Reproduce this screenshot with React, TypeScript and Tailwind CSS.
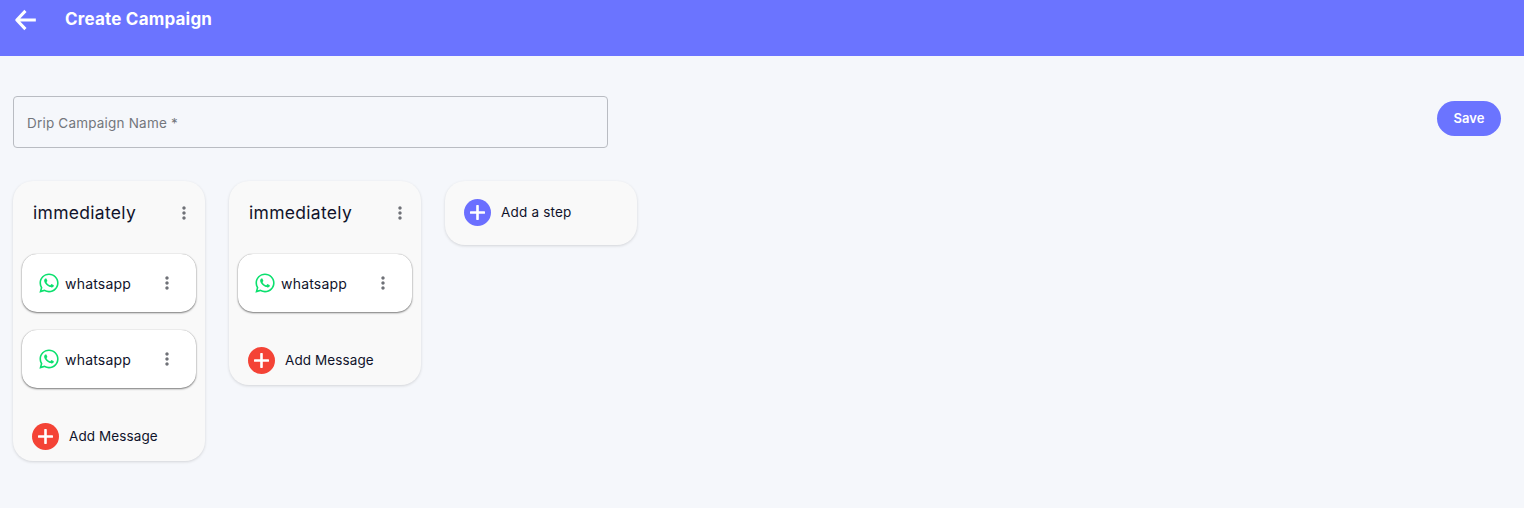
import React from "react";
import { FaWhatsapp } from "react-icons/fa";

const font = "font-['Inter','Liberation_Sans',sans-serif]";

function MoreVert() {
  return (
    <svg width="20" height="20" viewBox="0 0 24 24" fill="#6f7177" aria-hidden="true">
      <path d="M12 8c1.1 0 2-.9 2-2s-.9-2-2-2-2 .9-2 2 .9 2 2 2zm0 2c-1.1 0-2 .9-2 2s.9 2 2 2 2-.9 2-2-.9-2-2-2zm0 6c-1.1 0-2 .9-2 2s.9 2 2 2 2-.9 2-2-.9-2-2-2z" />
    </svg>
  );
}

function PlusCircle({ color }: { color: string }) {
  return (
    <span className={`flex h-[27px] w-[27px] shrink-0 items-center justify-center rounded-full ${color}`}>
      <svg width="15" height="15" viewBox="0 0 15 15" aria-hidden="true">
        <path d="M7.5 1v13M1 7.5h13" stroke="#fff" strokeWidth="2.6" strokeLinecap="round" />
      </svg>
    </span>
  );
}

function Message() {
  return (
    <div className="flex h-[58px] items-center rounded-[15px] bg-white pl-[16px] pr-[19px] shadow-[0_1px_2px_rgba(0,0,0,0.5),0_0_1px_rgba(0,0,0,0.3)]">
      <FaWhatsapp className="h-[22px] w-[22px] shrink-0 text-[#0be06e]" />
      <span className="ml-[5px] flex-1 text-[14px] tracking-[0.2px] text-[#10132b]">whatsapp</span>
      <MoreVert />
    </div>
  );
}

function Step({ count }: { count: number }) {
  return (
    <div className="flex w-[192px] flex-col rounded-[20px] bg-[#f9f9f9] pb-[11px] shadow-[0_1px_3px_rgba(0,0,0,0.14)]">
      <div className="mb-[9px] flex h-[64px] items-center justify-between pl-[20px] pr-[11px]">
        <span className="text-[17.5px] tracking-[0.3px] text-[#10132b]">immediately</span>
        <MoreVert />
      </div>
      <div className="flex flex-col gap-[18px] px-[9px]">
        {Array.from({ length: count }).map((_, i) => (
          <Message key={i} />
        ))}
      </div>
      <div className="mt-[35px] flex items-center pl-[19px]">
        <PlusCircle color="bg-[#f44336]" />
        <span className="ml-[10px] text-[13.5px] tracking-[0.1px] text-[#10132b]">Add Message</span>
      </div>
    </div>
  );
}

export default function App() {
  return (
    <div className={`${font} flex h-[508px] flex-col overflow-hidden bg-[#f5f7fb]`}>
      <header className="flex h-[56px] shrink-0 items-start bg-[#6b74ff] pl-[12px] pt-[7px] text-white">
        <svg width="26" height="26" viewBox="0 0 24 24" fill="none" stroke="#fff" strokeWidth="2.8" strokeLinejoin="round" aria-hidden="true">
          <path d="M22 12H4.4M12.4 3.6 4.4 12l8 8.4" />
        </svg>
        <h1 className="ml-[27px] mt-[2px] text-[17px] font-bold tracking-[0.2px] leading-[20px]">Create Campaign</h1>
      </header>
      <main className="flex flex-col px-[13px]">
        <div className="mt-[40px] flex items-start justify-between pr-[10px]">
          <div className="flex h-[52px] w-[595px] items-center rounded-[4px] border border-[#b9bcc2] pl-[13px] pt-[2px] text-[13.5px] tracking-[0.2px] text-[#73767c]">
            Drip Campaign Name *
          </div>
          <button className="mt-[5px] flex h-[35px] w-[64px] items-center justify-center rounded-full bg-[#6b74ff] text-[13px] font-semibold text-white">
            Save
          </button>
        </div>
        <div className="mt-[33px] flex items-start gap-[24px]">
          <Step count={2} />
          <Step count={1} />
          <div className="flex h-[64px] w-[192px] items-center rounded-[20px] bg-[#f9f9f9] pb-[1px] pl-[19px] shadow-[0_1px_3px_rgba(0,0,0,0.14)]">
            <PlusCircle color="bg-[#6b6fff]" />
            <span className="ml-[10px] text-[13.5px] tracking-[0.2px] text-[#10132b]">Add a step</span>
          </div>
        </div>
      </main>
    </div>
  );
}
